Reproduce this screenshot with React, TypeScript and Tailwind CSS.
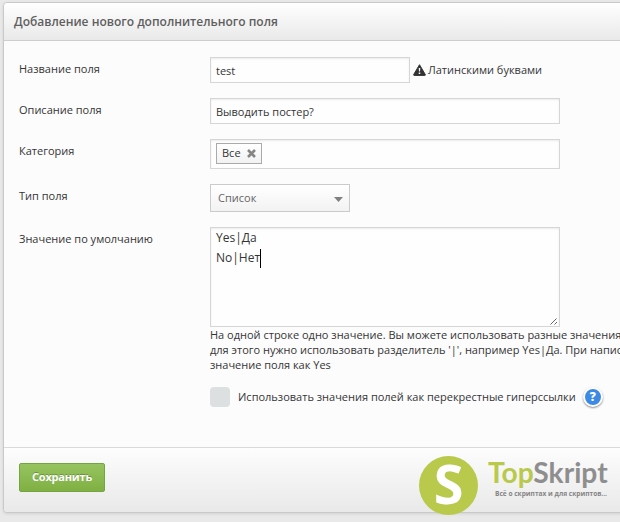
import type { ReactNode } from "react";

interface FieldRowProps {
    label?: string;
    className?: string;
    children: ReactNode;
}

function FieldRow({ label, className = "", children }: FieldRowProps) {
    return (
        <div className={`flex items-start ${className}`}>
            <label className="w-[191px] shrink-0 pt-1 leading-4">{label}</label>
            {children}
        </div>
    );
}

const inputClass = "border border-[#d6d6d6] bg-[#fefefe] shadow-[inset_0_1px_2px_rgba(0,0,0,0.08)]";

function WarningIcon() {
    return (
        <svg className="mb-px h-[12px] w-[13px] shrink-0" viewBox="0 0 13 12">
            <path
                d="M6.5 0.7 12.3 10.6Q12.6 11.4 11.8 11.4H1.2Q0.4 11.4 0.7 10.6Z"
                fill="#333"
                stroke="#333"
                strokeWidth="1"
                strokeLinejoin="round"
            />
            <path d="M5.7 4H7.3L7 7.5H6ZM5.7 8.5H7.3V10H5.7Z" fill="#fcfcfc" />
        </svg>
    );
}

function Logo() {
    return (
        <div className="absolute left-[419px] top-[456px] flex">
            <div className="flex size-[59px] items-center justify-center rounded-full bg-[#b9c94c] pb-[6px]">
                <span className="text-[54px] font-bold leading-none text-white">S</span>
            </div>
            <div className="ml-[10px] whitespace-nowrap">
                <div className="font-['Lato'] text-[28.2px] font-bold leading-[32px] text-[#8e8e8e]">
                    <span className="text-[#b9c94c]">Top</span>Skript
                </div>
                <div className="ml-[7px] mt-px text-[6.6px] font-bold leading-[9px] text-[#858585]">
                    Всё о скриптах и для скриптов...
                </div>
            </div>
        </div>
    );
}

export default function App() {
    return (
        <div className="relative h-[522px] w-[620px] overflow-hidden bg-[#e9e9e9] pl-[3px] pt-[2px] font-['Open_Sans','Noto_Sans',sans-serif] text-[11px] text-[#353535]">
            <div className="h-[511px] w-[640px] rounded border border-[#c9c9c9] bg-[#fcfcfc] shadow-[0_1px_3px_rgba(0,0,0,0.1)]">
                <div className="flex h-[38px] items-center rounded-t border-b border-[#cdcdcd] bg-linear-to-b from-white to-[#e9e9e9] pl-[10px] text-[12px] font-semibold text-[#5f5f5f]">
                    Добавление нового дополнительного поля
                </div>

                <div className="h-[406px] pl-[15px] pt-[16px]">
                    <FieldRow label="Название поля">
                        <div className={`flex h-[26px] w-[200px] items-center pl-[5px] pt-[2px] ${inputClass}`}>test</div>
                        <div className="ml-[3px] flex h-[26px] items-center gap-[2px]">
                            <WarningIcon />
                            <span>Латинскими буквами</span>
                        </div>
                    </FieldRow>

                    <FieldRow label="Описание поля" className="mt-[15px]">
                        <div className={`flex h-[26px] w-[350px] items-center pl-[5px] pt-[2px] ${inputClass}`}>
                            Выводить постер?
                        </div>
                    </FieldRow>

                    <FieldRow label="Категория" className="mt-[15px]">
                        <div className={`h-[30px] w-[350px] pl-[5px] pt-[3px] ${inputClass}`}>
                            <div className="flex h-[21px] w-[46px] items-center border border-[#aaa] bg-linear-to-b from-white to-[#f2f2f2] pl-[5px]">
                                Все
                                <svg className="ml-[6px] size-[9px]" viewBox="0 0 9 9">
                                    <path d="M1 1 8 8M8 1 1 8" stroke="#858585" strokeWidth="2.6" />
                                </svg>
                            </div>
                        </div>
                    </FieldRow>

                    <FieldRow label="Тип поля" className="mt-[15px]">
                        <div className="flex h-[28px] w-[140px] items-center justify-between border border-[#cbcbcb] bg-linear-to-b from-white to-[#f2f2f2] pl-[7px] pr-[6px] text-[#666]">
                            Список
                            <svg className="mt-[2px] h-[5px] w-[9px]" viewBox="0 0 9 5">
                                <path d="M0 0H9L4.5 5Z" fill="#808080" />
                            </svg>
                        </div>
                    </FieldRow>

                    <FieldRow label="Значение по умолчанию" className="mt-[15px]">
                        <div>
                            <div className={`relative h-[100px] w-[350px] pl-[5px] text-[12px] leading-5 ${inputClass}`}>
                                <div>Yes|Да</div>
                                <div className="flex items-center">
                                    No|Нет
                                    <span className="h-[19px] w-px bg-black" />
                                </div>
                                {/* resize grip */}
                                <svg className="absolute bottom-px right-px size-[8px]" viewBox="0 0 8 8">
                                    <path d="M0.5 7.5 6.5 1.5M4.5 7.5 7 5" stroke="#666" />
                                </svg>
                            </div>
                            <div className="whitespace-nowrap leading-[15px]">
                                <div>На одной строке одно значение. Вы можете использовать разные значения</div>
                                <div>для этого нужно использовать разделитель '|', например Yes|Да. При написании</div>
                                <div>значение поля как Yes</div>
                            </div>
                        </div>
                    </FieldRow>

                    <FieldRow className="mt-[15px]">
                        <div className="flex items-center whitespace-nowrap">
                            <div className="size-[20px] rounded-[4px] bg-[#dce0e1]" />
                            <span className="ml-[8px] pt-px">Использовать значения полей как перекрестные гиперссылки</span>
                            <span className="ml-[7px] flex size-[20px] items-center justify-center rounded-full border-2 border-white bg-[#3d8ae5] text-[12px] font-extrabold leading-none text-white shadow-[0_1px_2px_rgba(0,0,0,0.45)]">
                                ?
                            </span>
                        </div>
                    </FieldRow>
                </div>

                <div className="h-[65px] rounded-b border-t border-[#dadada] bg-linear-to-b from-[#fdfdfd] to-[#e9e9e9] pl-[15px] pt-[15px]">
                    <button className="h-[29px] w-[86px] rounded-[2px] border border-[#75a541] bg-linear-to-b from-[#96c35f] to-[#80b043] text-[11px] font-bold tracking-[-0.2px] text-white [text-shadow:0_-1px_0_rgba(0,0,0,0.25)]">
                        Сохранить
                    </button>
                </div>
            </div>
            <Logo />
        </div>
    );
}
